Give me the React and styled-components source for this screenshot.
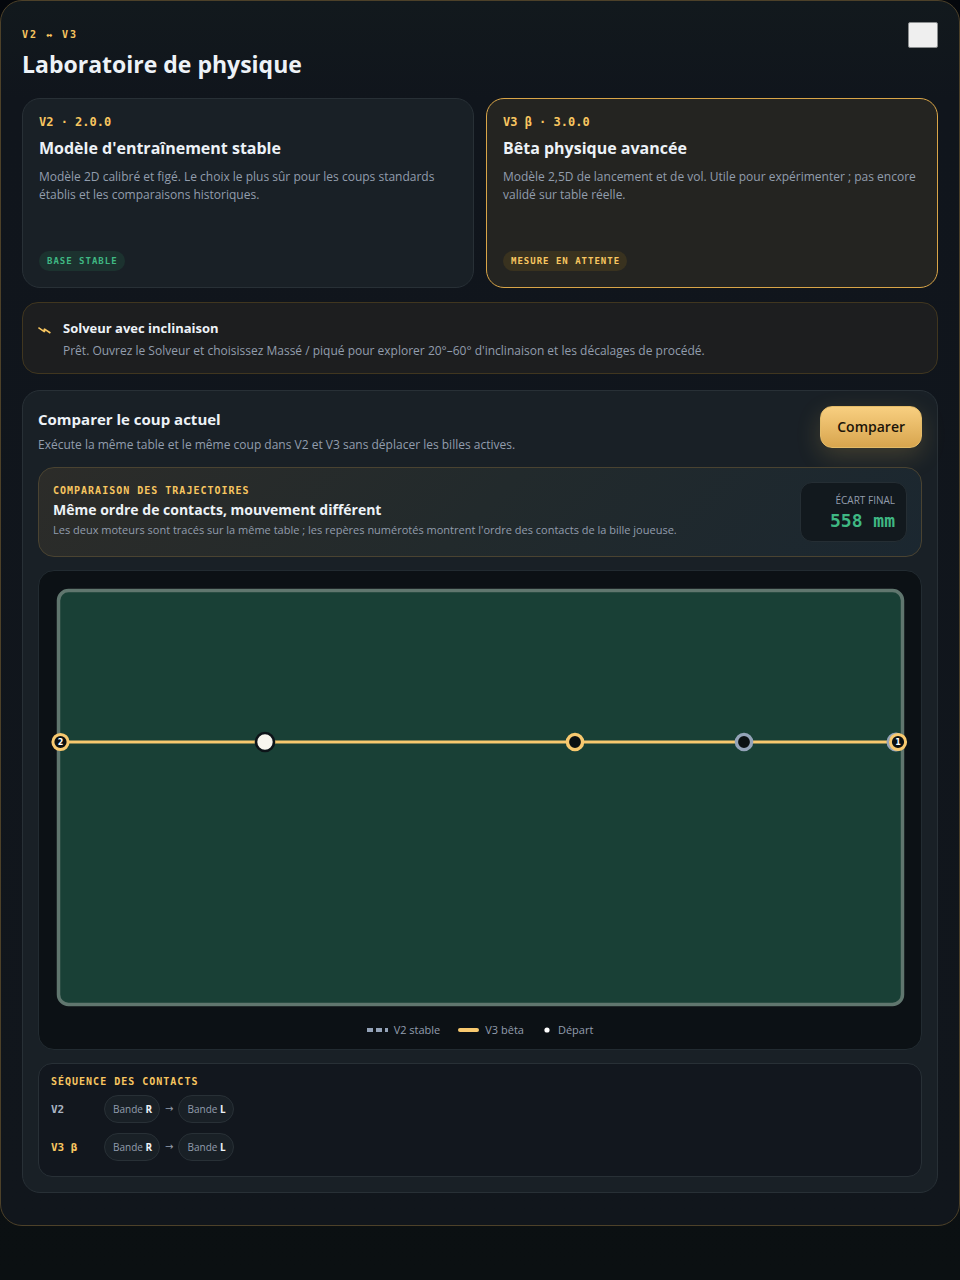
import React from "react";
import styled, { createGlobalStyle } from "styled-components";

const Global = createGlobalStyle`
  *, *::before, *::after { box-sizing: border-box; }
  html { background: #0b1012; }
  body {
    margin: 0;
    min-height: 100vh;
    background: linear-gradient(180deg, #04070c 0%, #0a0e11 40%, #0b1012 100%);
    color: #edf2f7;
    font-family: "Open Sans", "Noto Sans", sans-serif;
    font-size: 12px;
    line-height: 18px;
  }
  h1, h2, h3, p, ol, dl, dd { margin: 0; padding: 0; }
`;

const mono = `"DejaVu Sans Mono", "Liberation Mono", monospace`;

const Dialog = styled.main`
  padding: 21px 21px 32px;
  border: 1px solid #4d4129;
  border-radius: 22px;
  background: linear-gradient(180deg, #12191d 0%, #10151c 8%, #11161c 100%);
`;

const Header = styled.header`
  display: flex;
  justify-content: space-between;
  align-items: flex-start;
  margin-bottom: 18px;
`;

const Titles = styled.div`
  padding-top: 5px;
`;

const Eyebrow = styled.p`
  font-family: ${mono};
  font-weight: 700;
  font-size: 10px;
  line-height: 16px;
  letter-spacing: ${(p) => (p.$wide ? 2 : 1)}px;
  text-transform: uppercase;
  color: #f8c660;
`;

const Version = styled.p`
  font: 700 12px/16px ${mono};
  color: #f8c660;
`;

const Title = styled.h1`
  font-size: 23px;
  line-height: 32px;
  padding-top: 5px;
  font-weight: 700;
`;

const CloseButton = styled.button`
  width: 30px;
  height: 26px;
  padding: 0;
  border: 1px solid #8a8d8e;
  border-radius: 2px;
  background: #efefef;
`;

const Engines = styled.div`
  display: grid;
  grid-template-columns: 1fr 1fr;
  gap: 12px;
  margin-bottom: 14px;
`;

const EngineCard = styled.article`
  display: flex;
  flex-direction: column;
  align-items: flex-start;
  min-height: 190px;
  padding: 15px 16px 16px;
  border: 1px solid ${(p) => (p.$active ? "#d9a548" : "#283036")};
  border-radius: 18px;
  background: ${(p) => (p.$active ? "#242421" : "#192026")};
`;

const Heading = styled.h2`
  font-size: ${(p) => p.$size || 16}px;
  line-height: 24px;
  font-weight: 700;
`;

const CardHeading = styled(Heading)`
  margin-top: 6px;
`;

const Muted = styled.p`
  color: #929dad;
  font-size: ${(p) => (p.$small ? 11 : 12)}px;
  line-height: 18px;
`;

const CardText = styled(Muted)`
  margin: 8px 0 auto;
`;

const Badge = styled.span`
  padding: 2px 7px 2px 8px;
  border-radius: 10px;
  font-family: ${mono};
  font-size: 9px;
  line-height: 16px;
  font-weight: 700;
  letter-spacing: 1px;
  text-transform: uppercase;
  color: ${(p) => (p.$warm ? "#f8c660" : "#3fb883")};
  background: ${(p) => (p.$warm ? "#39321f" : "#1c322f")};
`;

const Notice = styled.section`
  display: flex;
  gap: 12px;
  min-height: 72px;
  padding: 13px 15px;
  margin-bottom: 16px;
  border: 1px solid #40361f;
  border-radius: 16px;
  background: #1d1e1f;
  svg { flex: none; margin-top: 7px; }
  p { margin-top: 2px; }
`;

const Compare = styled.section`
  display: grid;
  gap: 13px;
  padding: 15px;
  border: 1px solid #283036;
  border-radius: 18px;
  background: #192026;
`;

const CompareHead = styled.div`
  display: flex;
  justify-content: space-between;
  align-items: flex-start;
`;

const CompareIntro = styled.div`
  display: grid;
  gap: 5px;
  padding-top: 1px;
`;

const CompareButton = styled.button`
  height: 42px;
  padding: 0 16px;
  border: 1px solid #e3bb68;
  border-radius: 12px;
  background: linear-gradient(180deg, #f8cf80, #d8a54e);
  box-shadow: 0 8px 24px rgba(248, 198, 96, 0.18);
  color: #1c1408;
  font: 600 14px/20px "Open Sans", "Noto Sans", sans-serif;
`;

const Summary = styled.section`
  display: flex;
  justify-content: space-between;
  align-items: center;
  padding: 14px;
  border: 1px solid #4a4331;
  border-radius: 16px;
  background: linear-gradient(135deg, #2c2c29 0%, #222a2c 50%, #1b2730 100%);
`;

const SummaryText = styled.div`
  padding-bottom: 2px;
  h3 { line-height: 22px; }
`;

const Gap = styled.dl`
  min-width: 107px;
  padding: 9px 11px 8px;
  border: 1px solid #252e34;
  border-radius: 12px;
  background: #12191e;
  text-align: right;
  dt { font-size: 10px; line-height: 17px; color: #929dad; text-transform: uppercase; }
  dd { font: 700 18px/24px ${mono}; color: #3fb883; }
`;

const Board = styled.figure`
  margin: 0;
  padding: 9px 12px 10px;
  border: 1px solid #222b31;
  border-radius: 16px;
  background: #0c1115;
  > svg { display: block; width: 100%; height: auto; }
`;

const Legend = styled.figcaption`
  display: flex;
  justify-content: center;
  gap: 18px;
  padding-top: 7px;
  font-size: 11px;
  line-height: 18px;
  color: #929dad;
  span { display: flex; align-items: center; gap: 6px; }
`;

const Sequence = styled.section`
  display: grid;
  gap: 10px;
  padding: 10px 13px 15px 12px;
  border: 1px solid #283036;
  border-radius: 14px;
  background: #12171e;
`;

const SequenceRow = styled.div`
  display: grid;
  grid-template-columns: 47px 1fr;
  gap: 6px;
  align-items: center;
`;

const SequenceTitle = styled(Eyebrow)`
  margin-bottom: -5px;
`;

const RowName = styled.strong`
  padding-top: 1px;
  font: 700 11px/16px ${mono};
  color: ${(p) => (p.$warm ? "#f8c660" : "#a9b4c2")};
`;

const Steps = styled.ol`
  display: flex;
  align-items: center;
  list-style: none;
  gap: 5px;
  color: #929dad;
  font-size: 10px;
`;

const Step = styled.li`
  height: 28px;
  padding: 0 7px 0 8px;
  border: 1px solid #283036;
  border-radius: 14px;
  background: #192026;
  line-height: 26px;
  b { color: #edf2f7; }
`;

const Arrow = styled.li`
  font-family: "DejaVu Sans", sans-serif;
`;

const Contacts = ({ name, warm }) => (
  <SequenceRow>
    <RowName $warm={warm}>{name}</RowName>
    <Steps>
      <Step>Bande <b>R</b></Step>
      <Arrow aria-hidden="true">→</Arrow>
      <Step>Bande <b>L</b></Step>
    </Steps>
  </SequenceRow>
);

const Marker = ({ x, label }) => (
  <g>
    <circle cx={x} cy="162" r="7.6" fill="#0b1012" stroke="#f8c96f" strokeWidth="3" />
    <text x={x} y="165" textAnchor="middle" fontFamily="DejaVu Sans, sans-serif" fontSize="8" fontWeight="700" fill="#fff">
      {label}
    </text>
  </g>
);

export default function App() {
  return (
    <>
      <Global />
      <Dialog>
        <Header>
          <Titles>
            <Eyebrow $wide>V2 ↔ V3</Eyebrow>
            <Title>Laboratoire de physique</Title>
          </Titles>
          <CloseButton type="button" aria-label="Fermer" />
        </Header>

        <Engines>
          <EngineCard>
            <Version>V2 · 2.0.0</Version>
            <CardHeading>Modèle d'entraînement stable</CardHeading>
            <CardText>
              Modèle 2D calibré et figé. Le choix le plus sûr pour les coups standards établis et les comparaisons historiques.
            </CardText>
            <Badge>Base stable</Badge>
          </EngineCard>
          <EngineCard $active>
            <Version>V3 β · 3.0.0</Version>
            <CardHeading>Bêta physique avancée</CardHeading>
            <CardText>
              Modèle 2,5D de lancement et de vol. Utile pour expérimenter ; pas encore validé sur table réelle.
            </CardText>
            <Badge $warm>Mesure en attente</Badge>
          </EngineCard>
        </Engines>

        <Notice>
          <svg width="13" height="14" viewBox="0 0 13 14" fill="none" stroke="#f8c660" strokeWidth="1.6" strokeLinejoin="bevel">
            <path d="M0.4 4.6 L6.6 8.8 L6.2 5.8 L12.4 10" />
          </svg>
          <div>
            <Heading as="h3" $size={13}>Solveur avec inclinaison</Heading>
            <Muted>
              Prêt. Ouvrez le Solveur et choisissez Massé / piqué pour explorer 20°–60° d'inclinaison et les décalages de procédé.
            </Muted>
          </div>
        </Notice>

        <Compare>
          <CompareHead>
            <CompareIntro>
              <Heading $size={15}>Comparer le coup actuel</Heading>
              <Muted>Exécute la même table et le même coup dans V2 et V3 sans déplacer les billes actives.</Muted>
            </CompareIntro>
            <CompareButton type="button">Comparer</CompareButton>
          </CompareHead>

          <Summary>
            <SummaryText>
              <Eyebrow>Comparaison des trajectoires</Eyebrow>
              <Heading as="h3" $size={14}>Même ordre de contacts, mouvement différent</Heading>
              <Muted $small>
                Les deux moteurs sont tracés sur la même table ; les repères numérotés montrent l'ordre des contacts de la bille joueuse.
              </Muted>
            </SummaryText>
            <Gap>
              <dt>Écart final</dt>
              <dd>558 mm</dd>
            </Gap>
          </Summary>

          <Board>
            <svg viewBox="0 0 858 434" role="img" aria-label="Trajectoires V2 et V3">
              <rect x="7.5" y="10.5" width="844" height="414" rx="10" fill="#194036" stroke="#60766e" strokeWidth="3.5" />
              <path d="M9 162 H847" stroke="#94a3b8" strokeWidth="2" strokeDasharray="8 5" />
              <path d="M9 162 H847" stroke="#f8c96f" strokeWidth="3.2" />
              <circle cx="845" cy="162" r="8" fill="#0b1012" stroke="#94a3b8" strokeWidth="3" />
              <Marker x={847} label="1" />
              <Marker x={9.5} label="2" />
              <circle cx="214" cy="162" r="9" fill="#f8f6ef" stroke="#0d1419" strokeWidth="2.6" />
              <circle cx="524" cy="162" r="7.6" fill="#0b1012" stroke="#f8c96f" strokeWidth="3.4" />
              <circle cx="693" cy="162" r="7.6" fill="#0b1012" stroke="#94a3b8" strokeWidth="3.4" />
            </svg>
            <Legend>
              <span>
                <svg width="21" height="6"><path d="M0 3H21" stroke="#94a3b8" strokeWidth="4" strokeDasharray="6 3" /></svg>
                V2 stable
              </span>
              <span>
                <svg width="21" height="6"><path d="M2 3H19" stroke="#f8c96f" strokeWidth="4" strokeLinecap="round" /></svg>
                V3 bêta
              </span>
              <span>
                <svg width="10" height="6"><circle cx="5" cy="3" r="2.6" fill="#fff" /></svg>
                Départ
              </span>
            </Legend>
          </Board>

          <Sequence>
            <SequenceTitle>Séquence des contacts</SequenceTitle>
            <Contacts name="V2" />
            <Contacts name="V3 β" warm />
          </Sequence>
        </Compare>
      </Dialog>
    </>
  );
}
